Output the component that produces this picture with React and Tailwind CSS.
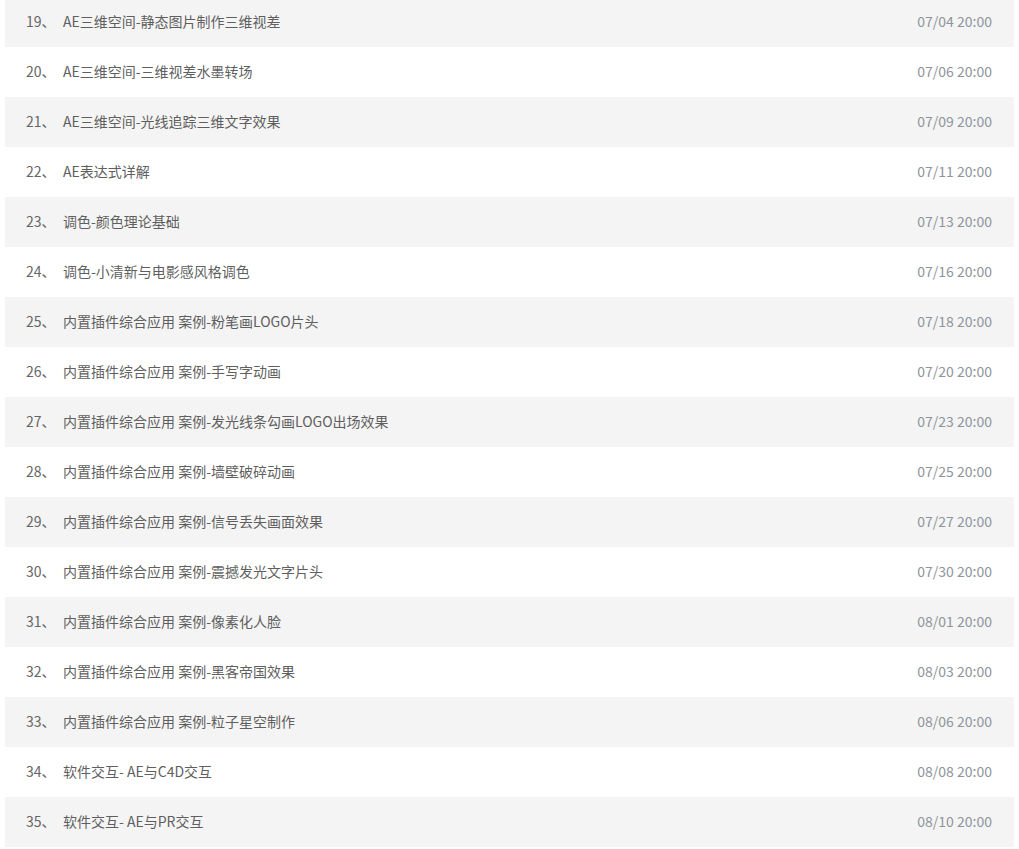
import React from 'react';

const lessons = [
  ['19', 'AE三维空间-静态图片制作三维视差', '07/04 20:00'],
  ['20', 'AE三维空间-三维视差水墨转场', '07/06 20:00'],
  ['21', 'AE三维空间-光线追踪三维文字效果', '07/09 20:00'],
  ['22', 'AE表达式详解', '07/11 20:00'],
  ['23', '调色-颜色理论基础', '07/13 20:00'],
  ['24', '调色-小清新与电影感风格调色', '07/16 20:00'],
  ['25', '内置插件综合应用 案例-粉笔画LOGO片头', '07/18 20:00'],
  ['26', '内置插件综合应用 案例-手写字动画', '07/20 20:00'],
  ['27', '内置插件综合应用 案例-发光线条勾画LOGO出场效果', '07/23 20:00'],
  ['28', '内置插件综合应用 案例-墙壁破碎动画', '07/25 20:00'],
  ['29', '内置插件综合应用 案例-信号丢失画面效果', '07/27 20:00'],
  ['30', '内置插件综合应用 案例-震撼发光文字片头', '07/30 20:00'],
  ['31', '内置插件综合应用 案例-像素化人脸', '08/01 20:00'],
  ['32', '内置插件综合应用 案例-黑客帝国效果', '08/03 20:00'],
  ['33', '内置插件综合应用 案例-粒子星空制作', '08/06 20:00'],
  ['34', '软件交互- AE与C4D交互', '08/08 20:00'],
  ['35', '软件交互- AE与PR交互', '08/10 20:00'],
];

const App = () => {
  return (
    <div
      className="h-[849px] overflow-hidden bg-white px-[4px] text-[14px]"
      style={{ fontFamily: '"Noto Sans CJK SC", "Noto Sans", sans-serif' }}
    >
      <ul className="-mt-[3px] w-[1010px] pl-[1px]">
        {lessons.map(([num, title, date], i) => (
          <li
            key={num}
            className={`flex h-[50px] items-center pb-[1px] pl-[21px] pr-[22px] ${i % 2 === 0 ? 'bg-[#f4f4f4]' : 'bg-white'}`}
          >
            <span className="w-[37px] shrink-0 text-[#666]">{num}、</span>
            <span className="flex-1 text-[#5f5f5f]">{title}</span>
            <span className="text-[#8e949b]">{date}</span>
          </li>
        ))}
      </ul>
    </div>
  );
};

export default App;
